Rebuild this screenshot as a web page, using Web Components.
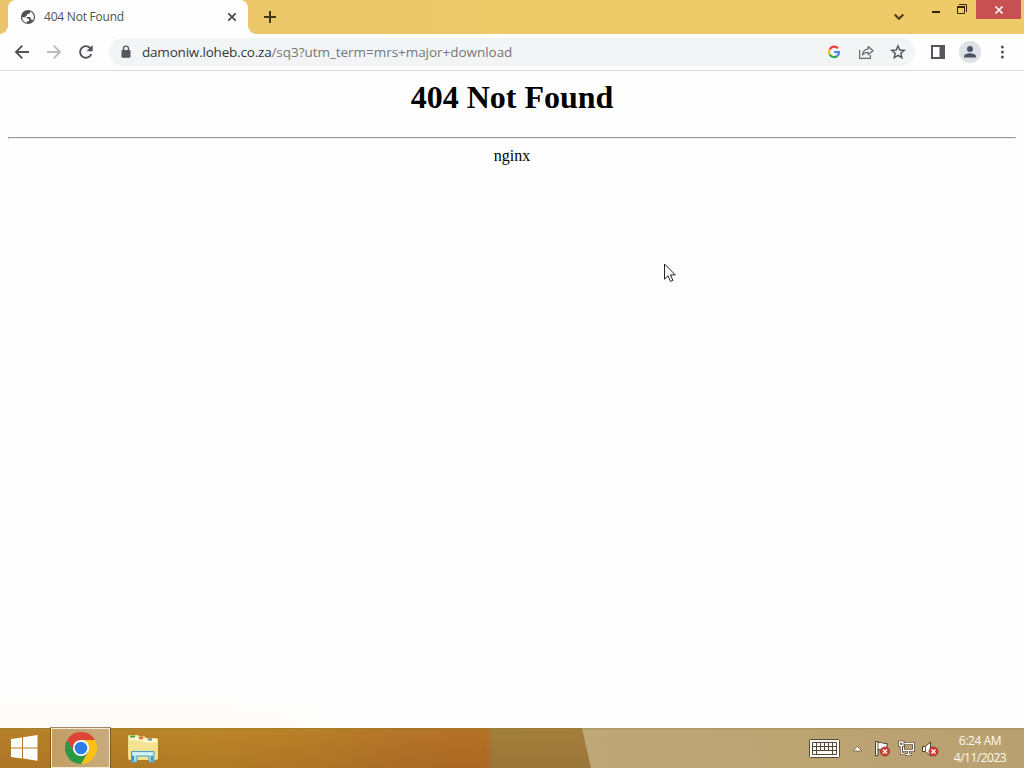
<!DOCTYPE html>
<html lang="en">
<head>
<meta charset="utf-8">
<title>404 Not Found</title>
<style>
    body {
        margin: 0;
        width: 1024px;
        height: 768px;
        overflow: hidden;
        background: #fefefe;
        font-family: "Open Sans", "Noto Sans", sans-serif;
    }
</style>
</head>
<body>
<desktop-screen>
    <tab-strip>
        <browser-tab>404 Not Found</browser-tab>
    </tab-strip>
    <tool-bar>
        <omni-box>
            <span slot="host">damoniw.loheb.co.za</span>
            <span slot="path">/sq3?utm_term=mrs+major+download</span>
        </omni-box>
    </tool-bar>
    <error-page server="nginx">404 Not Found</error-page>
    <task-bar>
        <tray-clock slot="clock" time="6:24 AM" date="4/11/2023"></tray-clock>
    </task-bar>
    <mouse-pointer></mouse-pointer>
</desktop-screen>

<script>
class DesktopScreen extends HTMLElement {
    constructor() {
        super();
        this.attachShadow({mode: 'open'});
        this.shadowRoot.innerHTML = `
            <style>
                :host {
                    display: flex;
                    flex-direction: column;
                    position: relative;
                    width: 1024px;
                    height: 768px;
                    overflow: hidden;
                }
            </style>
            <slot></slot>
        `;
    }
}

class BrowserTab extends HTMLElement {
    constructor() {
        super();
        this.attachShadow({mode: 'open'});
        this.shadowRoot.innerHTML = `
            <style>
                :host {
                    display: flex;
                    align-items: center;
                    box-sizing: border-box;
                    width: 240px;
                    height: 34px;
                    padding: 0 9px 0 12px;
                    margin-left: 8px;
                    background: #fefefe;
                    border-radius: 8px 8px 0 0;
                    color: #505255;
                    font-size: 12px;
                }
                .title {
                    flex: 1;
                    margin-left: 8px;
                    letter-spacing: -0.22px;
                    line-height: 16px;
                    white-space: nowrap;
                }
                svg { display: block; }
            </style>
            <svg width="16" height="16" viewBox="0 0 16 16">
                <circle cx="8" cy="8" r="7.1" fill="#505357"/>
                <path d="M2.200 8.300H5.500C7 8.300 7.600 9 7.600 10H9V12.200H6.800V13.800C4 13.300 2 11 2.200 8.300z" fill="#fff"/>
                <path d="M10 2.600V3.500C10 4.500 9.300 5 8.300 5H7V6C7 6.800 6.400 7.100 5.600 7.100V8.100H9.500C10.300 8.100 10.700 8.600 10.700 9.300V10.600H11.400C12.200 10.600 12.700 11 12.900 11.600C14.900 8.300 13.700 4.200 10 2.600z" fill="#fff"/>
            </svg>
            <span class="title"><slot></slot></span>
            <svg width="14" height="14" viewBox="0 0 14 14">
                <path d="M3.300 3.300l7.400 7.400M10.700 3.300l-7.400 7.400" stroke="#45484c" stroke-width="1.700"/>
            </svg>
        `;
    }
}

class TabStrip extends HTMLElement {
    constructor() {
        super();
        this.attachShadow({mode: 'open'});
        this.shadowRoot.innerHTML = `
            <style>
                :host {
                    display: flex;
                    height: 34px;
                    background: linear-gradient(90deg, #e9c46c, #edc968 50%, #efca69);
                }
                svg { display: block; }
                .curve {
                    align-self: flex-end;
                    width: 8px;
                    height: 8px;
                    background: radial-gradient(circle at 100% 0, transparent 7.5px, #fefefe 8px);
                }
                .curve.left {
                    margin-right: -8px;
                    background: radial-gradient(circle at 0 0, transparent 7.5px, #fefefe 8px);
                }
                .plus { margin: 9px 0 0 6px; }
                .space { flex: 1; }
                .search { margin: 8px 19px 0 0; }
                .window {
                    display: flex;
                    align-items: flex-start;
                    padding-right: 3px;
                }
                .close {
                    display: flex;
                    align-items: center;
                    justify-content: center;
                    width: 45px;
                    height: 19px;
                    background: #c75050;
                }
            </style>
            <div class="curve left"></div>
            <slot></slot>
            <div class="curve"></div>
            <svg class="plus" width="16" height="16" viewBox="0 0 16 16">
                <path d="M8 2v12M2 8h12" stroke="#443713" stroke-width="2"/>
            </svg>
            <div class="space"></div>
            <svg class="search" width="16" height="16" viewBox="0 0 16 16">
                <path d="M3.700 6.500L8 10.800l4.300-4.300" fill="none" stroke="#4b3a11" stroke-width="2"/>
            </svg>
            <div class="window">
                <svg width="26" height="20"><rect x="6" y="11" width="8" height="2" fill="#37230a"/></svg>
                <svg width="24" height="20" fill="none" stroke="#37230a">
                    <path d="M5.500 6.500h7v7h-7z"/>
                    <path d="M5 7h8" stroke-width="2"/>
                    <path d="M7 4.500h7.500V12"/>
                </svg>
                <div class="close">
                    <svg width="10" height="10" viewBox="0 0 10 10">
                        <path d="M1.500 1.500l7 7M8.500 1.500l-7 7" stroke="#fff" stroke-width="1.700"/>
                    </svg>
                </div>
            </div>
        `;
    }
}

class OmniBox extends HTMLElement {
    constructor() {
        super();
        this.attachShadow({mode: 'open'});
        this.shadowRoot.innerHTML = `
            <style>
                :host {
                    display: flex;
                    align-items: center;
                    box-sizing: border-box;
                    width: 806px;
                    height: 28px;
                    padding: 0 9px;
                    border-radius: 14px;
                    background: #f3f4f6;
                    font-size: 13.500px;
                }
                svg { display: block; }
                .url {
                    flex: 1;
                    display: flex;
                    margin-left: 8px;
                    line-height: 20px;
                    white-space: nowrap;
                }
                .host { color: #35373a; letter-spacing: -0.2px; }
                .path { color: #74777a; letter-spacing: -0.04px; }
                .actions { display: flex; gap: 16px; }
            </style>
            <svg width="16" height="16" viewBox="0 0 16 16">
                <rect x="3.500" y="6" width="9" height="7.700" rx="1" fill="#55585c"/>
                <path d="M5.500 6.500V4.600a2.500 2.500 0 0 1 5 0v1.900" fill="none" stroke="#55585c" stroke-width="1.400"/>
            </svg>
            <div class="url">
                <span class="host"><slot name="host"></slot></span>
                <span class="path"><slot name="path"></slot></span>
            </div>
            <div class="actions">
                <svg width="16" height="16" viewBox="0 0 16 16" fill="none" stroke-width="2.200">
                    <path d="M12 4.200A5.100 5.100 0 0 0 3.600 5.500" stroke="#ea4335"/>
                    <path d="M3.600 5.500A5.100 5.100 0 0 0 3.600 10.500" stroke="#fbbc05"/>
                    <path d="M3.600 10.500A5.100 5.100 0 0 0 11.400 11.800" stroke="#34a853"/>
                    <path d="M11.400 11.800A5 5 0 0 0 13 8H8.200" stroke="#4285f4"/>
                </svg>
                <svg width="16" height="16" viewBox="0 0 16 16" fill="none" stroke="#65686c" stroke-width="1.200">
                    <path d="M1.600 6v8.400h10.800V11"/>
                    <path d="M10.200 2.500L15 6.700l-4.800 4V8.300C7.500 8.300 5.700 9.200 4.400 11c.4-3.400 2.300-5.700 5.800-6.100z" stroke-linejoin="round"/>
                </svg>
                <svg width="16" height="16" viewBox="0 0 16 16" fill="none" stroke="#55585c" stroke-width="1.500">
                    <path d="M8 2l1.750 4.050 4.400.4-3.330 2.900 1 4.300L8 11.350l-3.820 2.300 1-4.300-3.330-2.900 4.400-.4z"/>
                </svg>
            </div>
        `;
    }
}

class ToolBar extends HTMLElement {
    constructor() {
        super();
        this.attachShadow({mode: 'open'});
        this.shadowRoot.innerHTML = `
            <style>
                :host {
                    display: flex;
                    align-items: center;
                    box-sizing: border-box;
                    height: 37px;
                    padding: 0 14px;
                    border-bottom: 1px solid #d9dbde;
                    background: #fefefe;
                }
                svg { display: block; }
                .nav { display: flex; gap: 16px; margin-right: 15px; }
                .menu { display: flex; align-items: center; margin-left: 15px; gap: 13px; }
                .avatar {
                    display: flex;
                    align-items: center;
                    justify-content: center;
                    width: 22px;
                    height: 22px;
                    border-radius: 50%;
                    background: #dee1e6;
                }
            </style>
            <div class="nav">
                <svg width="16" height="16" viewBox="0 0 16 16" fill="none" stroke="#505357" stroke-width="1.900">
                    <path d="M15 8H2.500M8.300 1.700L2 8l6.300 6.300"/>
                </svg>
                <svg width="16" height="16" viewBox="0 0 16 16" fill="none" stroke="#b9bbbd" stroke-width="1.900">
                    <path d="M1 8h12.500M7.700 1.700L14 8l-6.300 6.300"/>
                </svg>
                <svg width="16" height="16" viewBox="0 0 16 16">
                    <path d="M13.300 10A5.800 5.800 0 1 1 12.200 4.100L13 5" fill="none" stroke="#505357" stroke-width="1.900"/>
                    <path d="M14.700 1v6.300H8.500z" fill="#505357"/>
                </svg>
            </div>
            <slot></slot>
            <div class="menu">
                <svg width="16" height="16" viewBox="0 0 16 16">
                    <path d="M1 1h14v14H1zM3 3v10h6.500V3z" fill="#55585c" fill-rule="evenodd"/>
                </svg>
                <div class="avatar">
                    <svg width="14" height="14" viewBox="0 0 14 14" fill="#4b5464">
                        <circle cx="7" cy="4.100" r="3"/>
                        <path d="M1 12.500v-1.300C1 9.200 4.500 8.200 7 8.200s6 1 6 3v1.300z"/>
                    </svg>
                </div>
                <svg width="16" height="16" viewBox="0 0 16 16" fill="#505357">
                    <circle cx="8.400" cy="3.100" r="1.500"/>
                    <circle cx="8.400" cy="8" r="1.500"/>
                    <circle cx="8.400" cy="12.900" r="1.500"/>
                </svg>
            </div>
        `;
    }
}

class ErrorPage extends HTMLElement {
    constructor() {
        super();
        this.attachShadow({mode: 'open'});
        this.shadowRoot.innerHTML = `
            <style>
                :host {
                    display: block;
                    box-sizing: border-box;
                    height: 657px;
                    padding: 8px;
                    background:
                        linear-gradient(90deg, transparent 200px, #fefefe 350px),
                        linear-gradient(transparent 625px, #fcfaf3),
                        #fefefe;
                    color: #000;
                    font-family: "Liberation Serif", serif;
                    font-size: 16px;
                    text-align: center;
                }
                h1 {
                    margin: 0 0 21px;
                    font-size: 32px;
                    line-height: 37px;
                }
                hr { margin: 8px 0; }
                .server { line-height: 18px; }
            </style>
            <h1><slot></slot></h1>
            <hr>
            <div class="server"></div>
        `;
    }

    connectedCallback() {
        this.shadowRoot.querySelector('.server').textContent = this.getAttribute('server');
    }
}

class TrayClock extends HTMLElement {
    constructor() {
        super();
        this.attachShadow({mode: 'open'});
        this.shadowRoot.innerHTML = `
            <style>
                :host {
                    display: block;
                    width: 68px;
                    padding-top: 1px;
                    color: #fffaf0;
                    font-size: 12px;
                    line-height: 17px;
                    text-align: center;
                    white-space: nowrap;
                }
                .time { letter-spacing: -0.4px; }
                .date { letter-spacing: -0.5px; }
            </style>
            <div class="time"></div>
            <div class="date"></div>
        `;
    }

    connectedCallback() {
        this.shadowRoot.querySelector('.time').textContent = this.getAttribute('time');
        this.shadowRoot.querySelector('.date').textContent = this.getAttribute('date');
    }
}

class TaskBar extends HTMLElement {
    constructor() {
        super();
        this.attachShadow({mode: 'open'});
        this.shadowRoot.innerHTML = `
            <style>
                :host {
                    display: flex;
                    align-items: center;
                    box-sizing: border-box;
                    height: 40px;
                    padding-right: 10px;
                    background:
                        linear-gradient(rgba(110, 120, 60, .35), transparent 2px),
                        linear-gradient(77.300deg, transparent 576px, #bfa878 577px, #bba372 800px, #b8a072),
                        linear-gradient(rgba(255, 210, 40, .06), rgba(90, 50, 20, .08)),
                        linear-gradient(90deg, #b27b28, #b88128 200px, #b57a28 320px, #b17028 400px, #b16b24 485px, #9d7b3b 494px, #a07b3d 600px);
                }
                svg { display: block; }
                .start { margin: 0 13px 0 10px; }
                .chrome {
                    display: flex;
                    align-items: center;
                    justify-content: center;
                    box-sizing: border-box;
                    width: 59px;
                    height: 40px;
                    border: 1px solid #f4ead8;
                    background: linear-gradient(90deg, #c29d65, #c8ab7c);
                    box-shadow: 0 0 0 1px rgba(100, 60, 15, .6);
                }
                .files { margin-left: 16px; }
                .space { flex: 1; }
                .tray { display: flex; align-items: center; }
            </style>
            <svg class="start" width="28" height="28" viewBox="0 0 28 28" fill="#fff">
                <path d="M1 5l11-1.600v10H1zM13 3.200L27.500 1v12.400H13zM1 14.400h11v10L1 22.900zM13 14.400h14.500V26.700L13 24.600z"/>
            </svg>
            <div class="chrome">
                <svg width="32" height="32" viewBox="0 0 32 32">
                    <path d="M2.140 8A16 16 0 0 1 29.860 8H16L9.070 20z" fill="#dc4437"/>
                    <path d="M29.860 8A16 16 0 0 1 16 32l6.930-12L16 8z" fill="#fbc116"/>
                    <path d="M16 32A16 16 0 0 1 2.140 8l6.930 12h13.860z" fill="#2a9946"/>
                    <circle cx="16" cy="16" r="8" fill="#fff"/>
                    <circle cx="16" cy="16" r="6.300" fill="#2e7ce6"/>
                </svg>
            </div>
            <svg class="files" width="34" height="32" viewBox="0 0 34 32">
                <path d="M2 4l1-1h9l1 1.500h6l1 1.500h11l1 1v20l-2 1H3l-1-2z" fill="#f2dc84"/>
                <path d="M3 8h28v19H3z" fill="#f3e294"/>
                <path d="M3 3.500h9l1 2h6l1 1.500h11v3H19l-3-2H3z" fill="#fff6ca"/>
                <path d="M4 3.500h5v2H4z" fill="#35a936"/>
                <path d="M13 5h4v2.200h-4z" fill="#e36140"/>
                <path d="M22 6.500h4v2h-4z" fill="#528db9"/>
                <path d="M3 8h11l3 2h14" fill="none" stroke="#fff7c7"/>
                <path d="M5.500 30V19.500h22.500V30h-5v-6H11v6z" fill="#a8ddf0" stroke="#4ca4c5"/>
                <path d="M7 21h20M7 22.500h19" stroke="#e4fbff"/>
                <path d="M7 24v5M26 24v5" stroke="#388fc4" stroke-width="2"/>
            </svg>
            <div class="space"></div>
            <div class="tray">
                <svg width="31" height="20" viewBox="0 0 31 20">
                    <rect x=".5" y="1.500" width="30" height="18" rx="1" fill="#fffdf5" stroke="#574a39"/>
                    <path d="M3.500 4.500h24v12h-24zM3.500 8.500h24M3.500 12.500h24M7.500 4.500v12M11.500 4.500v8M15.500 4.500v8M19.500 4.500v8M23.500 4.500v12" fill="none" stroke="#51483b"/>
                </svg>
                <svg width="34" height="24" viewBox="0 0 34 24">
                    <path d="M13 15l4.500-4.500L22 15z" fill="#fff" stroke="#75603d" stroke-width=".8"/>
                </svg>
                <svg width="24" height="24" viewBox="0 0 24 24">
                    <path d="M1.500 5.500h2.500v1c4-.8 5 1.800 9 .8v7c-4 1-5-1.300-9-.6v6H1.500z" fill="#fff" stroke="#4e3d26"/>
                    <path d="M4 6v9" stroke="#6b5434"/>
                    <circle cx="11" cy="15.500" r="4.600" fill="#d23b32" stroke="#912a23" stroke-width=".6"/>
                    <path d="M9 13.500l4 4M13 13.500l-4 4" stroke="#fff" stroke-width="1.400"/>
                </svg>
                <svg width="24" height="24" viewBox="0 0 24 24">
                    <path d="M5.500 7.500h10v7h-10z" fill="#b9a072" stroke="#483820" stroke-width="2.600"/>
                    <path d="M5.500 7.500h10v7h-10z" fill="none" stroke="#fff" stroke-width="1.300"/>
                    <path d="M10.500 15v3M7 18.500h7" stroke="#483820" stroke-width="2.600"/>
                    <path d="M10.500 15v3M7.500 18.500h6" stroke="#fff" stroke-width="1.300"/>
                    <path d="M1.500 6h3.500v3.500H1.500zM3.300 10v7.500h2.500" fill="#b9a072" stroke="#483820" stroke-width="2.600"/>
                    <path d="M1.500 6h3.500v3.500H1.500zM3.300 10v7.500h2.500" fill="none" stroke="#fff" stroke-width="1.300"/>
                </svg>
                <svg width="24" height="24" viewBox="0 0 24 24">
                    <path d="M.5 10.500h3L8.500 6v14l-5-4.500h-3z" fill="#fff" stroke="#4e3d26"/>
                    <path d="M3.500 10.500v5" stroke="#77603d"/>
                    <circle cx="11.500" cy="15.500" r="4.600" fill="#d23b32" stroke="#912a23" stroke-width=".6"/>
                    <path d="M9.500 13.500l4 4M13.500 13.500l-4 4" stroke="#fff" stroke-width="1.400"/>
                </svg>
            </div>
            <slot name="clock"></slot>
        `;
    }
}

class MousePointer extends HTMLElement {
    constructor() {
        super();
        this.attachShadow({mode: 'open'});
        this.shadowRoot.innerHTML = `
            <style>
                :host {
                    display: block;
                    position: absolute;
                    left: 664px;
                    top: 263px;
                }
                svg { display: block; }
            </style>
            <svg width="13" height="20" viewBox="0 0 13 20">
                <path d="M.5 1v15.200l3.600-3.400 2.400 5.600 2.400-1-2.400-5.500h4.800z" fill="#fff" stroke="#222"/>
            </svg>
        `;
    }
}

customElements.define('desktop-screen', DesktopScreen);
customElements.define('browser-tab', BrowserTab);
customElements.define('tab-strip', TabStrip);
customElements.define('omni-box', OmniBox);
customElements.define('tool-bar', ToolBar);
customElements.define('error-page', ErrorPage);
customElements.define('tray-clock', TrayClock);
customElements.define('task-bar', TaskBar);
customElements.define('mouse-pointer', MousePointer);
</script>
</body>
</html>
